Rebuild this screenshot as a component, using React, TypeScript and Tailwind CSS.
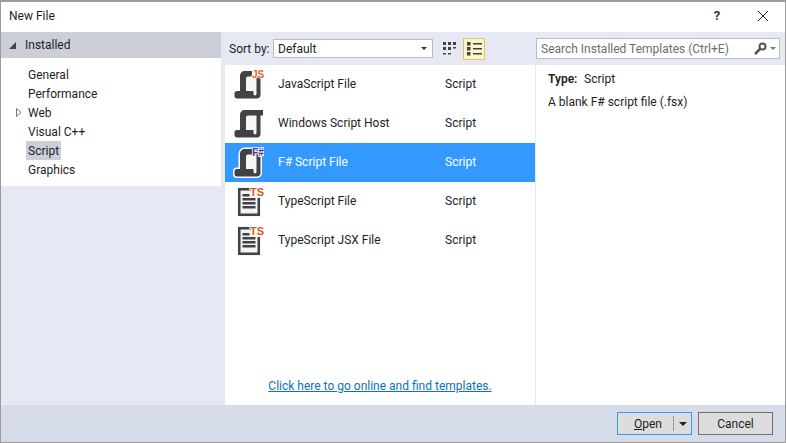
const font = { fontFamily: 'Roboto, "Noto Sans", sans-serif' };

const scrollOuter =
  "M13 2H31V7.500H28.500V26c0 2-1.500 3.500-3.500 3.500H5c-1.500 0-2.500-1-2.500-2.500V24.500C2.500 23 3.500 22 5 22H8V7C8 4 10 2 13 2z";

function ScrollIcon({ badge, badgeColor, halo }: { badge?: string; badgeColor?: string; halo?: boolean }) {
  return (
    <svg width="32" height="32" viewBox="0 0 32 32">
      {halo && <path d={scrollOuter} fill="#fff" stroke="#fff" strokeWidth="3" />}
      <path d={scrollOuter} fill="#424242" />
      <path d="M16 7.500H24.500V24.500c0 1.200-.5 2-1.500 2s-1.500-.8-1.500-2V22H14V9.500c0-1.200.8-2 2-2z" fill="#f6f6f6" />
      {badge && <rect x="20" y="0" width="12" height="7.500" fill={halo ? "#3399ff" : "#fff"} />}
      {badge && (
        <text
          x="26"
          y="9"
          textAnchor="middle"
          fontSize="10"
          fontWeight="700"
          fill={badgeColor}
          stroke="#fff"
          strokeWidth="1.500"
          paintOrder="stroke"
          fontFamily="Liberation Sans, sans-serif"
        >
          {badge}
        </text>
      )}
    </svg>
  );
}

function TsIcon() {
  return (
    <svg width="32" height="32" viewBox="0 0 32 32">
      <path d="M5 1h14v6h10v24H5z" fill="#f4f4f4" />
      <path d="M6 2h13v2.500H8.500V27.500H25.500V12H28V30H6z" fill="#424242" />
      <path d="M10.500 8h7v2.500h-7zM10.500 12h13v2.500h-13zM10.500 16h13v2.500h-13zM10.500 20h13v2.500h-13z" fill="#424242" />
      <text
        x="25"
        y="10"
        textAnchor="middle"
        fontSize="11"
        fontWeight="700"
        fill="#d9591c"
        stroke="#fff"
        strokeWidth="1.500"
        paintOrder="stroke"
        fontFamily="Liberation Sans, sans-serif"
      >
        TS
      </text>
    </svg>
  );
}

const templates = [
  { name: "JavaScript File", icon: <ScrollIcon badge="JS" badgeColor="#e8622a" /> },
  { name: "Windows Script Host", icon: <ScrollIcon /> },
  { name: "F# Script File", icon: <ScrollIcon badge="F#" badgeColor="#5b2a86" halo />, selected: true },
  { name: "TypeScript File", icon: <TsIcon /> },
  { name: "TypeScript JSX File", icon: <TsIcon /> },
];

const categories = ["General", "Performance", "Web", "Visual C++", "Script", "Graphics"];

function SmallIconsGlyph() {
  return (
    <svg width="14" height="14" viewBox="0 0 14 14" fill="#424242">
      <path d="M0 0h3v3H0zM5 0h3v3H5zM10 0h3v3h-3zM0 5h3v3H0zM5 5h3v3H5zM10 5h3v1.500h-3zM0 11h3v1.500H0zM5 11h3v1.500H5z" />
    </svg>
  );
}

function ListGlyph() {
  return (
    <svg width="15" height="14" viewBox="0 0 15 14" fill="#424242">
      <path d="M0 0h3.500v3.500H0zM0 5h3.500v3.500H0zM0 10h3.500v3.500H0zM6 1h9v1.500H6zM6 6h9v1.500H6zM6 11h9v1.500H6z" />
    </svg>
  );
}

export default function App() {
  return (
    <div style={font} className="w-[786px] h-[443px] flex flex-col border border-[#9b9b9b] border-t-2 bg-white text-[12px] text-[#1e1e1e] overflow-hidden">
      {/* title bar */}
      <div className="h-[30px] shrink-0 flex items-center bg-white pb-[2px]">
        <span className="pl-[8px] grow">New File</span>
        <span className="w-[48px] text-center text-[13px] font-bold text-[#333]">?</span>
        <span className="w-[44px] flex justify-center">
          <svg width="12" height="12" viewBox="0 0 12 12" stroke="#222" fill="none">
            <path d="M1 1l10 10M11 1L1 11" />
          </svg>
        </span>
      </div>

      <div className="grow flex min-h-0 bg-[#e6e9f4]">
        {/* left tree */}
        <div className="w-[220px] shrink-0 flex flex-col">
          <div className="h-[26px] bg-[#ccced9] flex items-center pl-[8px] gap-[9px]">
            <span className="w-0 h-0 border-l-[7px] border-l-transparent border-b-[7px] border-b-[#444]" />
            <span>Installed</span>
          </div>
          <div className="h-[128px] bg-white pt-[7px] pl-[25px] flex flex-col">
            {categories.map((c) => (
              <div key={c} className="h-[19px] flex items-center relative">
                {c === "Web" && (
                  <svg className="absolute left-[-10px] top-[5px]" width="6" height="9" viewBox="0 0 6 9" fill="#fff" stroke="#777">
                    <path d="M.5.5l4.500 4-4.500 4z" />
                  </svg>
                )}
                <span className={c === "Script" ? "bg-[#ccced9] px-[2px] h-[19px] flex items-center" : "px-[2px]"}>{c}</span>
              </div>
            ))}
          </div>
        </div>

        {/* middle column */}
        <div className="w-[314px] shrink-0 flex flex-col pl-[4px]">
          <div className="h-[33px] shrink-0 flex items-center pl-[4px]">
            <span className="w-[44px]">Sort by:</span>
            <div className="w-[160px] h-[19px] bg-white border border-[#b7bccb] flex items-center pl-[4px] pr-[5px] justify-between">
              <span>Default</span>
              <span className="w-0 h-0 border-x-[3px] border-x-transparent border-t-[3px] border-t-[#333]" />
            </div>
            <span className="ml-[10px] w-[20px] h-[22px] flex items-center">
              <SmallIconsGlyph />
            </span>
            <span className="w-[22px] h-[22px] flex items-center justify-center bg-[#fff6cf] border border-[#e5c365]">
              <ListGlyph />
            </span>
          </div>
          <div className="grow bg-white flex flex-col min-h-0">
            {templates.map((t) => (
              <div key={t.name} className={"h-[39px] shrink-0 flex items-center " + (t.selected ? "bg-[#3399ff] text-white" : "")}>
                <span className="w-[53px] pl-[7px] shrink-0">{t.icon}</span>
                <span className="w-[167px] shrink-0 pb-[2px]">{t.name}</span>
                <span className="pb-[2px]">Script</span>
              </div>
            ))}
            <div className="mt-auto h-[28px] text-center">
              <span className="underline text-[#0e70c0]">Click here to go online and find templates.</span>
            </div>
          </div>
        </div>

        {/* details column */}
        <div className="grow flex flex-col pl-[1px] min-w-0">
          <div className="h-[33px] shrink-0 flex items-center">
            <div className="w-[244px] h-[21px] bg-white border border-[#b7bccb] flex items-center pl-[4px] pr-[3px] justify-between text-[#6d6d6d]">
              <span>Search Installed Templates (Ctrl+E)</span>
              <span className="flex items-center gap-[3px]">
                <svg width="13" height="13" viewBox="0 0 13 13" fill="none" stroke="#555">
                  <circle cx="8.500" cy="4.500" r="3" strokeWidth="2" />
                  <path d="M6 7l-5 5" strokeWidth="2.500" />
                </svg>
                <span className="w-0 h-0 border-x-[3px] border-x-transparent border-t-[3px] border-t-[#777]" />
              </span>
            </div>
          </div>
          <div className="grow bg-white pl-[12px] pt-[2px]">
            <div className="h-[23px] flex items-center">
              <span className="font-semibold w-[36px]">Type:</span>
              <span>Script</span>
            </div>
            <div className="h-[23px] flex items-center">A blank F# script file (.fsx)</div>
          </div>
        </div>
      </div>

      {/* footer */}
      <div className="h-[37px] shrink-0 bg-[#d6dbe9] flex items-center justify-end pr-[12px] gap-[6px]">
        <div className="w-[75px] h-[23px] bg-[#dddddd] border border-[#3399ff] flex items-center">
          <span className="w-[55px] pl-[5px] text-center"><u>O</u>pen</span>
          <span className="w-px h-[15px] bg-[#999]" />
          <span className="ml-[5px] w-0 h-0 border-x-[4px] border-x-transparent border-t-[4px] border-t-[#222]" />
        </div>
        <div className="w-[75px] h-[23px] bg-[#dddddd] border border-[#707070] flex items-center justify-center">Cancel</div>
      </div>
    </div>
  );
}
